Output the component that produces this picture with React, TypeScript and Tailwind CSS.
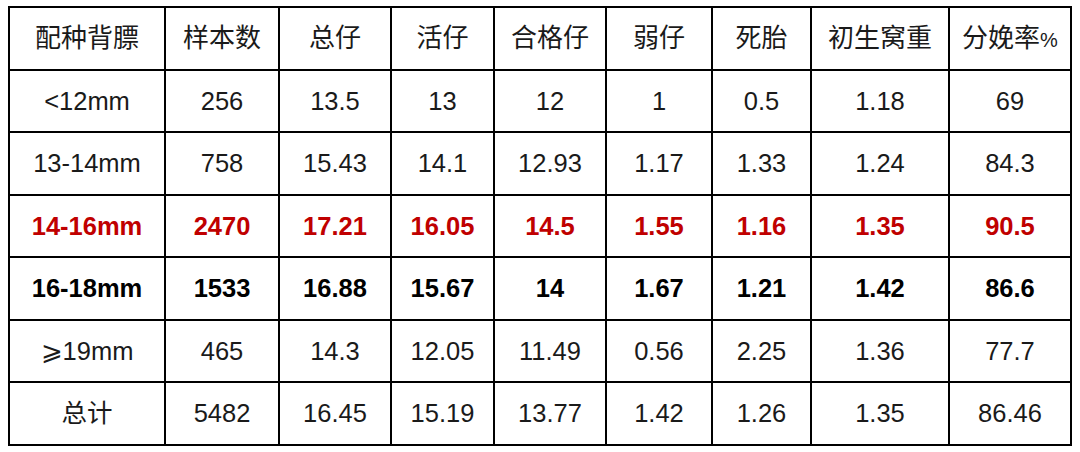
import React from 'react';

type Row = { cells: string[]; tone?: 'red' | 'bold' };

const widths = [156, 114, 112, 103, 112, 106, 99, 138, 122];

const rows: Row[] = [
  { cells: ['<12mm', '256', '13.5', '13', '12', '1', '0.5', '1.18', '69'] },
  { cells: ['13-14mm', '758', '15.43', '14.1', '12.93', '1.17', '1.33', '1.24', '84.3'] },
  { cells: ['14-16mm', '2470', '17.21', '16.05', '14.5', '1.55', '1.16', '1.35', '90.5'], tone: 'red' },
  { cells: ['16-18mm', '1533', '16.88', '15.67', '14', '1.67', '1.21', '1.42', '86.6'], tone: 'bold' },
  { cells: ['⩾19mm', '465', '14.3', '12.05', '11.49', '0.56', '2.25', '1.36', '77.7'] },
  { cells: ['总计', '5482', '16.45', '15.19', '13.77', '1.42', '1.26', '1.35', '86.46'] },
];

const font = { fontFamily: '"Liberation Sans", "Noto Sans CJK SC", sans-serif' };

export default function App() {
  return (
    <div className="w-[1080px] h-[452px] bg-white pl-[8px] pt-[6px]" style={font}>
      <table className="border-collapse border-2 border-black text-[#1a1a1a]">
        <colgroup>
          {widths.map((w, i) => (
            <col key={i} style={{ width: w }} />
          ))}
        </colgroup>
        <thead>
          <tr className="h-[62.5px]">
            {['配种背膘', '样本数', '总仔', '活仔', '合格仔', '弱仔', '死胎', '初生窝重'].map(h => (
              <th key={h} className="border-2 border-black p-0 text-center font-normal text-[26px]">
                {h}
              </th>
            ))}
            <th className="border-2 border-black p-0 text-center font-normal text-[26px]">
              分娩率<span className="text-[20px]">%</span>
            </th>
          </tr>
        </thead>
        <tbody>
          {rows.map((r, i) => (
            <tr key={i} className="h-[62.5px]">
              {r.cells.map((c, j) => (
                <td
                  key={j}
                  className={
                    'border-2 border-black p-0 text-center text-[25.5px] ' +
                    (r.tone === 'red'
                      ? 'text-[#c00000] font-semibold'
                      : r.tone === 'bold'
                      ? 'text-black font-bold'
                      : '')
                  }
                >
                  {c}
                </td>
              ))}
            </tr>
          ))}
        </tbody>
      </table>
    </div>
  );
}
